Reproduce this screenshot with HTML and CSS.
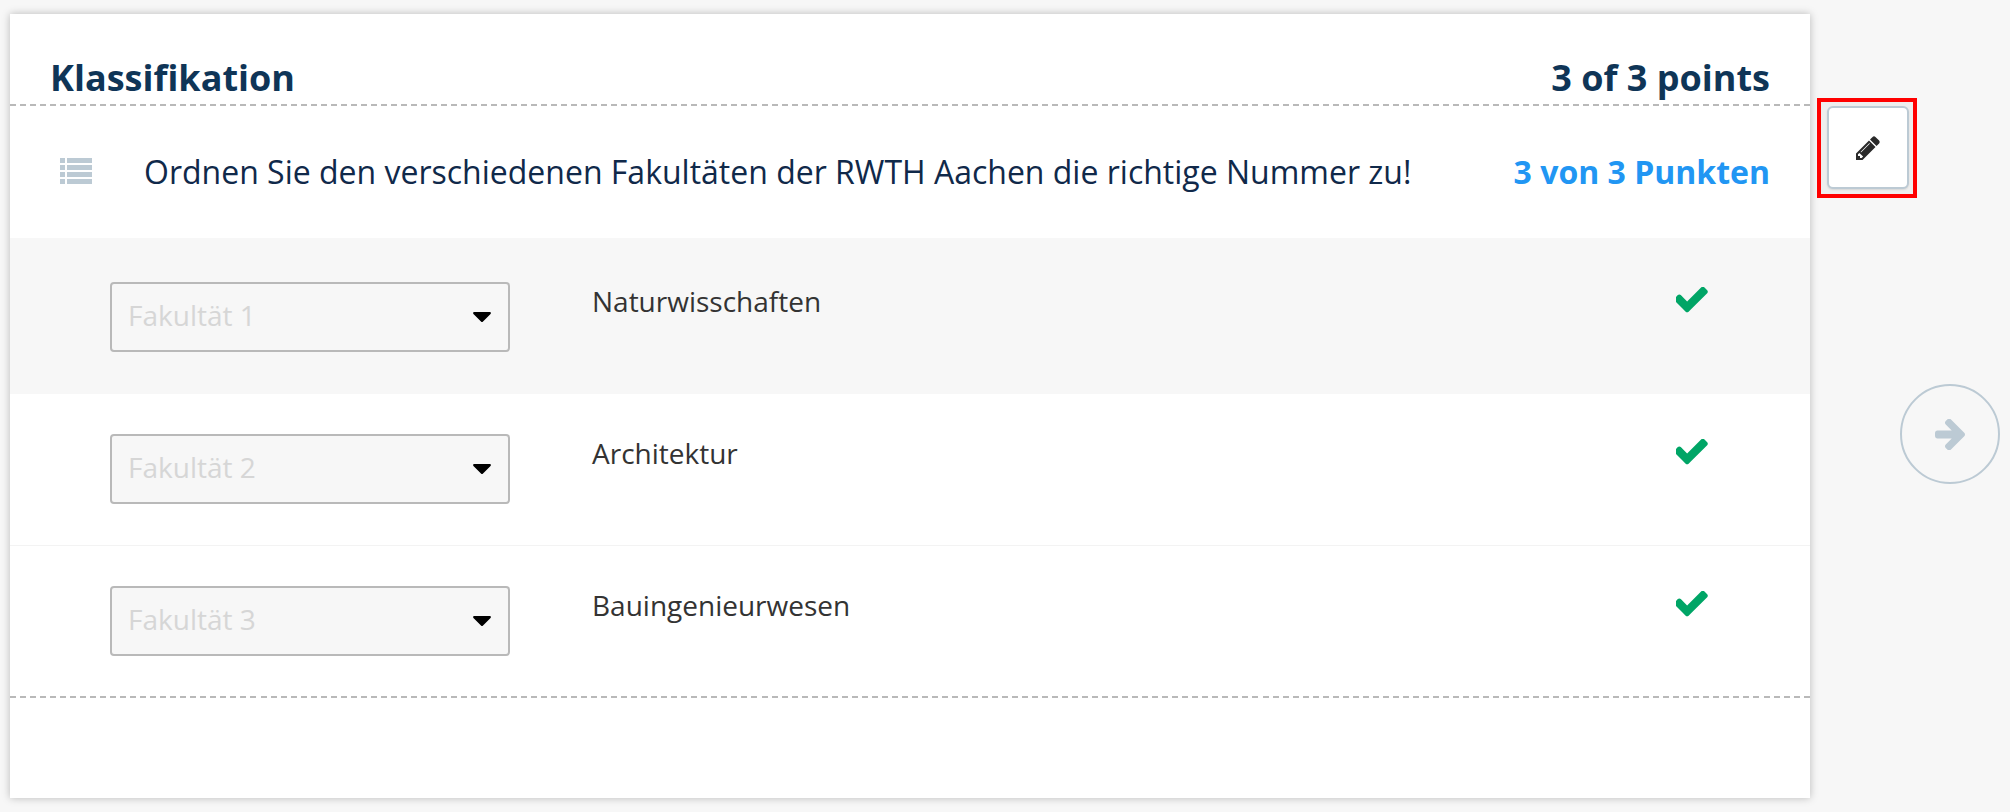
FILE: index.html
```html
<!DOCTYPE html>
<html lang="en">
<head>
    <meta charset="UTF-8">
    <meta name="viewport" content="width=device-width, initial-scale=1.0">
    <title>Klassifikation</title>
    <link rel="stylesheet" href="styles.css">
</head>
<body>
    <div class="page">
        <main class="card">
            <header class="card-header">
                <h1>Klassifikation</h1>
                <span class="total-points">3 of 3 points</span>
            </header>
            <div class="question">
                <svg class="list-icon" viewBox="0 0 32 26">
                    <rect x="0" y="0" width="5" height="5"/><rect x="7" y="0" width="25" height="5"/>
                    <rect x="0" y="7" width="5" height="5"/><rect x="7" y="7" width="25" height="5"/>
                    <rect x="0" y="14" width="5" height="5"/><rect x="7" y="14" width="25" height="5"/>
                    <rect x="0" y="21" width="5" height="5"/><rect x="7" y="21" width="25" height="5"/>
                </svg>
                <p class="question-text">Ordnen Sie den verschiedenen Fakultäten der RWTH Aachen die richtige Nummer zu!</p>
                <span class="question-points">3 von 3 Punkten</span>
            </div>
            <div class="answers">
                <div class="answer answer-first">
                    <div class="select-box">
                        <select disabled><option>Fakultät 1</option></select>
                        <svg class="caret-icon" viewBox="384 640 1024 576"><path d="M1408 704q0 26-19 45l-448 448q-19 19-45 19t-45-19l-448-448q-19-19-19-45t19-45 45-19h896q26 0 45 19t19 45z"/></svg>
                    </div>
                    <span class="answer-label">Naturwisschaften</span>
                    <svg class="check-icon" viewBox="200 400 1480 1100"><path d="M1671 566q0 40-28 68l-724 724-136 136q-28 28-68 28t-68-28l-136-136-362-362q-28-28-28-68t28-68l136-136q28-28 68-28t68 28l294 295 656-657q28-28 68-28t68 28l136 136q28 28 28 68z"/></svg>
                </div>
                <div class="answer">
                    <div class="select-box">
                        <select disabled><option>Fakultät 2</option></select>
                        <svg class="caret-icon" viewBox="384 640 1024 576"><path d="M1408 704q0 26-19 45l-448 448q-19 19-45 19t-45-19l-448-448q-19-19-19-45t19-45 45-19h896q26 0 45 19t19 45z"/></svg>
                    </div>
                    <span class="answer-label">Architektur</span>
                    <svg class="check-icon" viewBox="200 400 1480 1100"><path d="M1671 566q0 40-28 68l-724 724-136 136q-28 28-68 28t-68-28l-136-136-362-362q-28-28-28-68t28-68l136-136q28-28 68-28t68 28l294 295 656-657q28-28 68-28t68 28l136 136q28 28 28 68z"/></svg>
                </div>
                <div class="answer">
                    <div class="select-box">
                        <select disabled><option>Fakultät 3</option></select>
                        <svg class="caret-icon" viewBox="384 640 1024 576"><path d="M1408 704q0 26-19 45l-448 448q-19 19-45 19t-45-19l-448-448q-19-19-19-45t19-45 45-19h896q26 0 45 19t19 45z"/></svg>
                    </div>
                    <span class="answer-label">Bauingenieurwesen</span>
                    <svg class="check-icon" viewBox="200 400 1480 1100"><path d="M1671 566q0 40-28 68l-724 724-136 136q-28 28-68 28t-68-28l-136-136-362-362q-28-28-28-68t28-68l136-136q28-28 68-28t68 28l294 295 656-657q28-28 68-28t68 28l136 136q28 28 28 68z"/></svg>
                </div>
            </div>
        </main>
        <aside class="side">
            <div class="edit-highlight">
                <button class="edit-button" type="button">
                    <svg class="pencil-icon" viewBox="128 128 1536 1536"><path d="M491 1536l91-91-235-235-91 91v107h128v128h107zm523-928q0-22-22-22-10 0-17 7l-542 542q-7 7-7 17 0 22 22 22 10 0 17-7l542-542q7-7 7-17zm-54-192l416 416-832 832h-416v-416zm683 96q0 53-37 90l-166 166-416-416 166-165q36-38 90-38 53 0 91 38l235 234q37 39 37 91z"/></svg>
                </button>
            </div>
            <button class="next-button" type="button">
                <svg class="arrow-icon" viewBox="128 220 1472 1480"><path d="M1600 960q0 54-37 91l-651 651q-39 37-91 37-51 0-90-37l-75-75q-38-38-38-91t38-91l293-293h-704q-52 0-84.5-37.5t-32.5-90.5v-128q0-53 32.5-90.5t84.5-37.5h704l-293-294q-38-36-38-90t38-90l75-75q38-38 90-38 53 0 91 38l651 651q37 35 37 90z"/></svg>
            </button>
        </aside>
    </div>
</body>
</html>
```

FILE: styles.css
```css
html, body {
    margin: 0;
    height: 100%;
    overflow: hidden;
}
body {
    background-color: #f7f7f7;
    font-family: "Open Sans", sans-serif;
}
.page {
    display: flex;
    align-items: flex-start;
    padding: 14px 0 0 10px;
}
.card {
    width: 1800px;
    height: 784px;
    flex-shrink: 0;
    background-color: #ffffff;
    box-shadow: 0 0 8px rgba(0, 0, 0, 0.25);
}
.card-header {
    display: flex;
    justify-content: space-between;
    align-items: flex-end;
    height: 92px;
    padding: 0 40px 4px 40px;
    box-sizing: border-box;
    color: #0f3557;
    background-image: repeating-linear-gradient(90deg, #b9b9b9 0, #b9b9b9 6px, transparent 6px, transparent 10.02px);
    background-size: 100% 2px;
    background-position: left bottom;
    background-repeat: no-repeat;
}
.card-header h1 {
    margin: 0;
    font-size: 36px;
    line-height: 48px;
    font-weight: 700;
}
.total-points {
    font-size: 36px;
    line-height: 48px;
    font-weight: 700;
}
.question {
    display: flex;
    align-items: center;
    height: 132px;
    padding: 0 40px 0 50px;
    box-sizing: border-box;
}
.list-icon {
    width: 32px;
    height: 26px;
    margin-top: -2px;
    fill: #bccad4;
    flex-shrink: 0;
}
.question-text {
    flex: 1;
    margin: -2px 0 0 52px;
    font-size: 32px;
    color: #10294a;
}
.question-points {
    margin-top: -2px;
    font-size: 32px;
    font-weight: 700;
    color: #2196f3;
}
.answers {
    height: 460px;
    box-sizing: border-box;
    background-image: repeating-linear-gradient(90deg, #b9b9b9 0, #b9b9b9 6px, transparent 6px, transparent 10.02px);
    background-size: 100% 2px;
    background-position: left bottom;
    background-repeat: no-repeat;
}
.answer {
    display: flex;
    align-items: flex-start;
    height: 152px;
    padding: 40px 0 0 100px;
    box-sizing: border-box;
    border-bottom: 1px solid #f3f3f3;
}
.answer:last-child {
    border-bottom: none;
}
.answer-first {
    height: 156px;
    padding-top: 44px;
    background-color: #f7f7f7;
    border-bottom: none;
}
.select-box {
    position: relative;
    width: 400px;
    height: 70px;
    flex-shrink: 0;
}
.select-box select {
    width: 100%;
    height: 100%;
    padding: 0 16px 4px;
    appearance: none;
    background-color: #f7f7f7;
    border: 2px solid #b9b9b9;
    border-radius: 4px;
    font-family: "Open Sans", sans-serif;
    font-size: 28px;
    color: #d6d6d6;
    opacity: 1;
}
.caret-icon {
    position: absolute;
    right: 19px;
    top: 30px;
    width: 18px;
    height: 10px;
    fill: #000000;
}
.answer-label {
    width: 1084px;
    margin-left: 82px;
    margin-top: -1px;
    font-size: 28px;
    line-height: 40px;
    color: #333333;
}
.check-icon {
    width: 32px;
    height: 26px;
    margin-top: 5px;
    fill: #00a566;
    flex-shrink: 0;
}
.side {
    display: flex;
    flex-direction: column;
    flex: 1;
    margin-left: 7px;
}
.edit-highlight {
    width: 100px;
    height: 100px;
    margin-top: 84px;
    box-sizing: border-box;
    border: 4px solid #ff0000;
    padding: 4px 4px 5px 6px;
    background-color: #eeeeee;
}
.edit-button {
    display: flex;
    align-items: center;
    justify-content: center;
    width: 100%;
    height: 100%;
    padding: 0;
    background-color: #ffffff;
    border: 2px solid #bccad4;
    border-radius: 6px;
    box-shadow: 0 1px 2px rgba(0, 0, 0, 0.1);
}
.pencil-icon {
    width: 24px;
    height: 24px;
    fill: #2a2a2a;
}
.next-button {
    display: flex;
    align-items: center;
    justify-content: center;
    align-self: flex-end;
    width: 100px;
    height: 100px;
    margin-top: 186px;
    margin-right: 10px;
    padding: 0;
    background-color: transparent;
    border: 2px solid #bccad4;
    border-radius: 50%;
}
.arrow-icon {
    width: 30px;
    height: 31px;
    fill: #bccad4;
}
```
